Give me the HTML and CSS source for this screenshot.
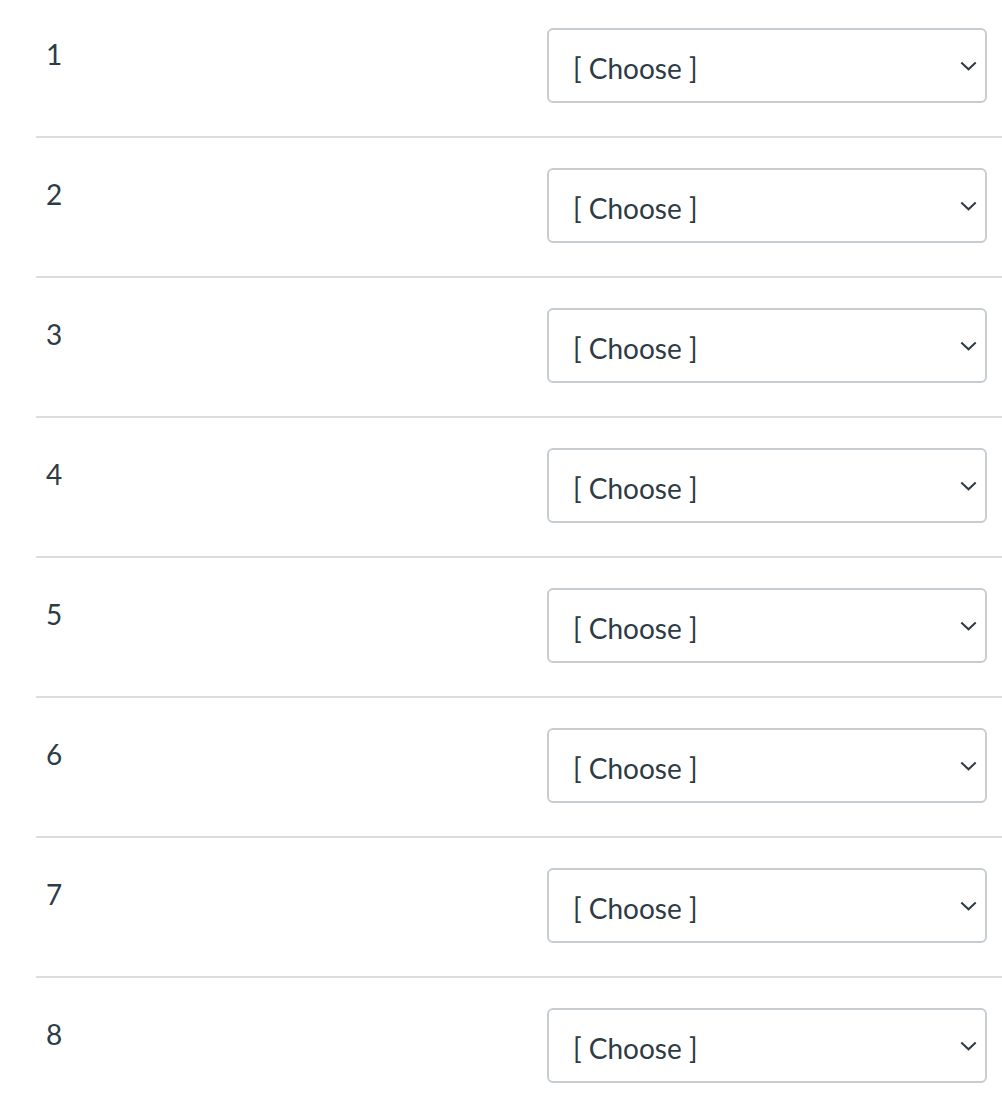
FILE: index.html
```html
<!DOCTYPE html>
<html>
<head>
<meta charset="utf-8">
<link rel="stylesheet" href="styles.css">
</head>
<body>
<div class="list">
  <div class="row"><div class="num">1</div><div class="field"><select class="choice"><option>[ Choose ]</option></select><svg class="chev" viewBox="0 0 17 10" width="17" height="10"><path d="M1.3 1.5 L8.5 8.3 L15.7 1.5" fill="none" stroke="#2d3b45" stroke-width="2"/></svg></div></div>
  <div class="row"><div class="num">2</div><div class="field"><select class="choice"><option>[ Choose ]</option></select><svg class="chev" viewBox="0 0 17 10" width="17" height="10"><path d="M1.3 1.5 L8.5 8.3 L15.7 1.5" fill="none" stroke="#2d3b45" stroke-width="2"/></svg></div></div>
  <div class="row"><div class="num">3</div><div class="field"><select class="choice"><option>[ Choose ]</option></select><svg class="chev" viewBox="0 0 17 10" width="17" height="10"><path d="M1.3 1.5 L8.5 8.3 L15.7 1.5" fill="none" stroke="#2d3b45" stroke-width="2"/></svg></div></div>
  <div class="row"><div class="num">4</div><div class="field"><select class="choice"><option>[ Choose ]</option></select><svg class="chev" viewBox="0 0 17 10" width="17" height="10"><path d="M1.3 1.5 L8.5 8.3 L15.7 1.5" fill="none" stroke="#2d3b45" stroke-width="2"/></svg></div></div>
  <div class="row"><div class="num">5</div><div class="field"><select class="choice"><option>[ Choose ]</option></select><svg class="chev" viewBox="0 0 17 10" width="17" height="10"><path d="M1.3 1.5 L8.5 8.3 L15.7 1.5" fill="none" stroke="#2d3b45" stroke-width="2"/></svg></div></div>
  <div class="row"><div class="num">6</div><div class="field"><select class="choice"><option>[ Choose ]</option></select><svg class="chev" viewBox="0 0 17 10" width="17" height="10"><path d="M1.3 1.5 L8.5 8.3 L15.7 1.5" fill="none" stroke="#2d3b45" stroke-width="2"/></svg></div></div>
  <div class="row"><div class="num">7</div><div class="field"><select class="choice"><option>[ Choose ]</option></select><svg class="chev" viewBox="0 0 17 10" width="17" height="10"><path d="M1.3 1.5 L8.5 8.3 L15.7 1.5" fill="none" stroke="#2d3b45" stroke-width="2"/></svg></div></div>
  <div class="row"><div class="num">8</div><div class="field"><select class="choice"><option>[ Choose ]</option></select><svg class="chev" viewBox="0 0 17 10" width="17" height="10"><path d="M1.3 1.5 L8.5 8.3 L15.7 1.5" fill="none" stroke="#2d3b45" stroke-width="2"/></svg></div></div>
</div>
</body>
</html>
```
FILE: styles.css
```css
html, body {
  margin: 0;
  padding: 0;
  background: #ffffff;
  font-family: Lato, "Liberation Sans", sans-serif;
  color: #2d3b45;
}

.list {
  margin-left: 36px;
}

.row {
  display: flex;
  justify-content: space-between;
  align-items: flex-start;
  padding: 30px 15px 33px 10px;
  border-bottom: 2px solid #dcdcdc;
}

.row:first-child {
  padding-top: 28px;
}

.num {
  font-size: 28px;
  line-height: 28px;
  padding-top: 12px;
  color: #2d3b45;
}

.field {
  position: relative;
  width: 440px;
  height: 75px;
}

.choice {
  -webkit-appearance: none;
  appearance: none;
  box-sizing: border-box;
  display: block;
  width: 100%;
  height: 75px;
  margin: 0;
  border: 2px solid #c7cdd1;
  border-radius: 6px;
  background: #ffffff;
  font-family: Lato, "Liberation Sans", sans-serif;
  font-size: 28px;
  color: #2d3b45;
  padding: 4px 40px 0 24px;
  outline: none;
}

.chev {
  position: absolute;
  left: 413px;
  top: 33px;
  pointer-events: none;
}
```
